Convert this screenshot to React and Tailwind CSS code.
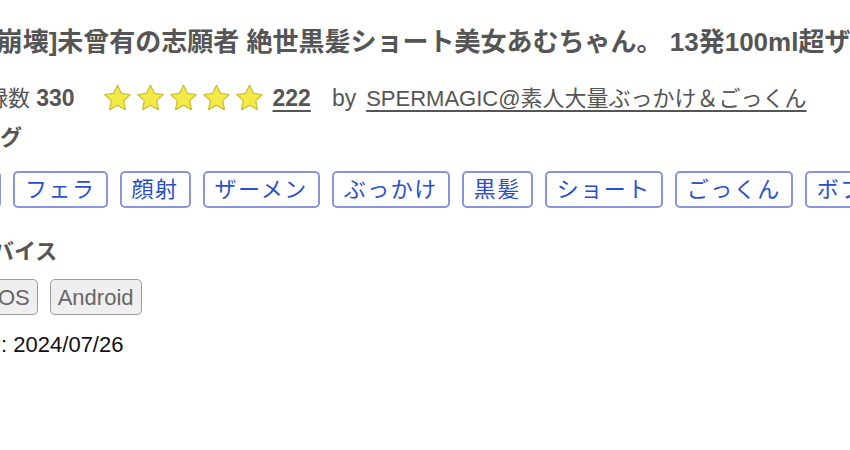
import React from 'react';

const tags = ['素人', 'フェラ', '顔射', 'ザーメン', 'ぶっかけ', '黒髪', 'ショート', 'ごっくん', 'ボブ'];
const devices = ['iOS', 'Android'];

const Star = () => (
  <svg width="31" height="30" viewBox="0 0 24 24" className="shrink-0">
    <polygon
      points="12,1.8 15.1,8.3 22.2,9.2 17,14.1 18.3,21.3 12,17.8 5.7,21.3 7,14.1 1.8,9.2 8.9,8.3"
      fill="#f4ea45"
      stroke="#cdbd34"
      strokeWidth="1"
      strokeLinejoin="round"
    />
  </svg>
);

const App = () => {
  return (
    <div className="w-[850px] h-[450px] overflow-hidden bg-white font-['Liberation_Sans','Noto_Sans_CJK_JP',sans-serif] text-[#555]">
      <div className="pt-[26px]">
        {/* title */}
        <h1 className="ml-[-64px] whitespace-nowrap text-[26px] font-bold leading-[32px] text-[#555]">
          [顔面崩壊]未曾有の志願者 絶世黒髪ショート美女あむちゃん。 13発100ml超ザーメンぶっかけ
        </h1>

        {/* stats row */}
        <div className="mt-[22px] ml-[-36px] flex h-[36px] items-center whitespace-nowrap text-[22px]">
          <span>登録数 <b className="text-[23px] font-bold">330</b></span>
          <div className="ml-[27px] flex gap-[2px]">
            {[0, 1, 2, 3, 4].map((i) => (
              <Star key={i} />
            ))}
          </div>
          <a className="ml-[8px] text-[23px] font-bold underline underline-offset-[4px]">222</a>
          <span className="ml-[21px] text-[23px]">by</span>
          <a className="ml-[10px] underline underline-offset-[4px]">SPERMAGIC@素人大量ぶっかけ＆ごっくん</a>
        </div>

        {/* tags */}
        <h2 className="mt-[8px] ml-[-22px] text-[22px] font-bold leading-[28px]">タグ</h2>
        <div className="mt-[19px] ml-[-70px] flex gap-[12px] whitespace-nowrap">
          {tags.map((t) => (
            <span
              key={t}
              className="flex h-[37px] shrink-0 items-center rounded-[5px] border-2 border-[#8a93de] px-[10px] text-[22px] tracking-[1.5px] text-[#2a4fcc]"
            >
              {t}
            </span>
          ))}
        </div>

        {/* devices */}
        <h2 className="mt-[30px] ml-[-30px] text-[22px] font-bold leading-[28px]">デバイス</h2>
        <div className="mt-[13px] ml-[-15px] flex gap-[12px]">
          {devices.map((d) => (
            <span
              key={d}
              className="flex h-[36px] items-center rounded-[5px] border-[1.5px] border-[#9a9a9a] bg-[#efefef] px-[7px] text-[22px] text-[#666]"
            >
              {d}
            </span>
          ))}
        </div>

        {/* date */}
        <p className="mt-[16px] ml-[-71px] text-[22px] leading-[28px] text-[#111]">公開日 : 2024/07/26</p>
      </div>
    </div>
  );
};

export default App;
